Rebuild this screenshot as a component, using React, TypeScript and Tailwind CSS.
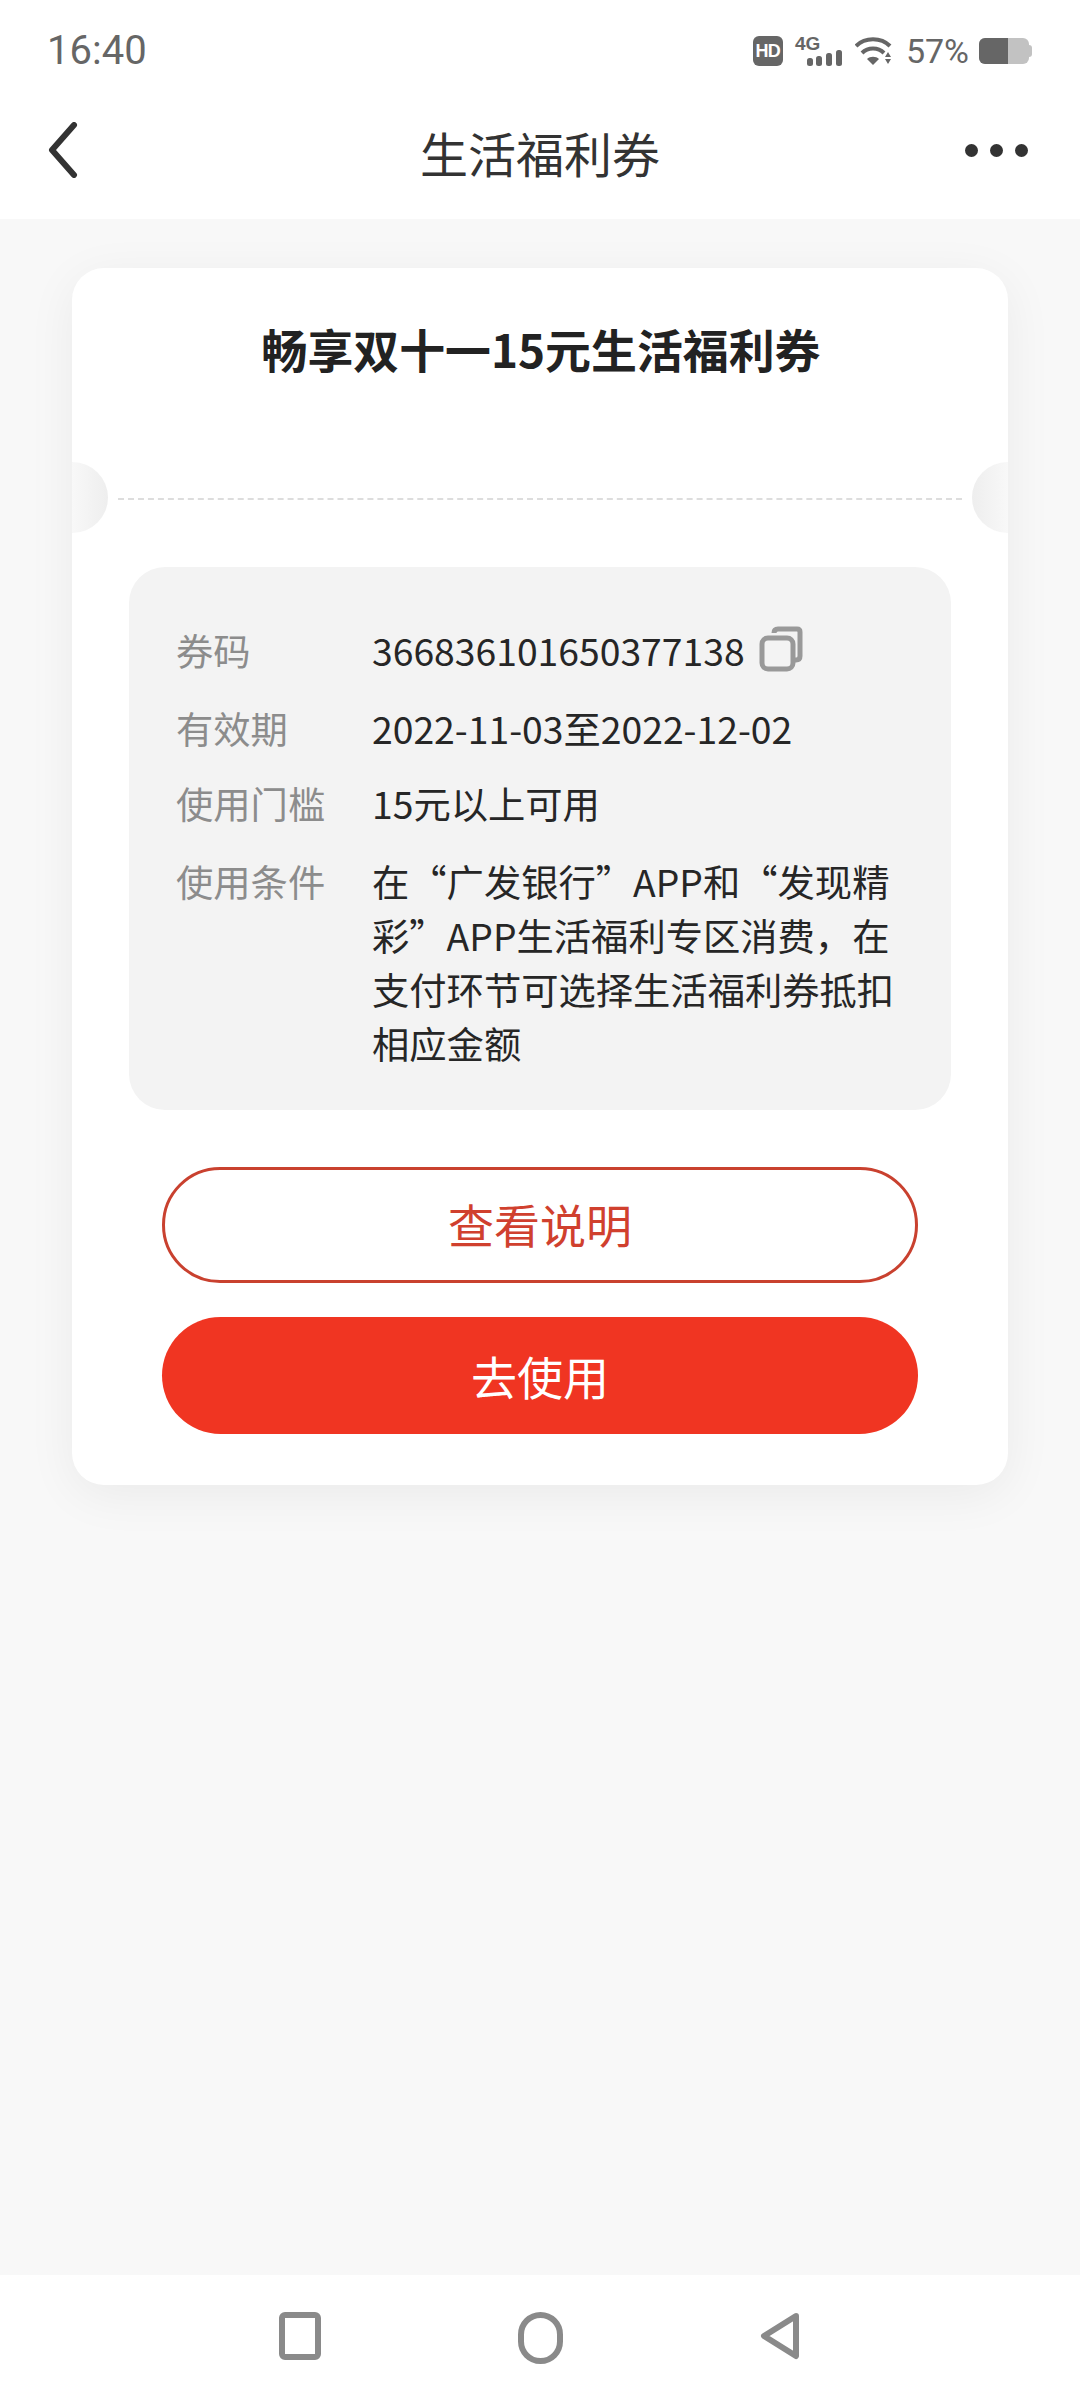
import React from "react";

const StatusIcons = () => (
  <div className="flex items-center text-[#666666]">
    <div className="flex h-[30px] w-[30px] items-center justify-center rounded-[6px] bg-[#666666] font-['Liberation_Sans',sans-serif] text-[18px] font-bold tracking-[-0.5px] text-white">
      HD
    </div>
    <div className="relative ml-[12px] h-[30px] w-[47px]">
      <span className="absolute left-0 top-[-3px] font-['Liberation_Sans',sans-serif] text-[19px] font-bold leading-[22px]">4G</span>
      <svg width="47" height="30" viewBox="0 0 47 30" fill="#666666">
        <rect x="12" y="22" width="6" height="8" rx="2.5" />
        <rect x="21" y="20" width="6" height="10" rx="2.5" />
        <rect x="31" y="17" width="6" height="13" rx="2.5" />
        <rect x="41" y="14" width="6" height="16" rx="2.5" />
      </svg>
    </div>
    <svg width="37" height="28" viewBox="0 0 37 28" className="ml-[13px]" fill="none" stroke="#666666" strokeWidth="4">
      <path d="M1 9 C 10 0, 26 0, 35 9" />
      <path d="M7 16 C 13 10, 23 10, 29 16" />
      <path d="M12 22 L18 28 L24 22 C 21 19, 15 19, 12 22 Z" fill="#666666" stroke="none" />
      <path d="M30 20 L33 15 L36 20 Z M30 22 L33 27 L36 22 Z" fill="#666666" stroke="none" />
    </svg>
    <span className="ml-[14px] font-['Roboto',sans-serif] text-[34px] leading-none">57%</span>
    <div className="ml-[10px] flex items-center">
      <div className="flex h-[26px] w-[50px] overflow-hidden rounded-[6px] bg-[#c2c2c2]">
        <div className="h-full w-[29px] bg-[#666666]" />
      </div>
      <div className="h-[12px] w-[3px] rounded-r-[3px] bg-[#c2c2c2]" />
    </div>
  </div>
);

const Row = ({ label, className, children }: { label: string; className?: string; children: React.ReactNode }) => (
  <div className={`flex ${className ?? ""}`}>
    <div className="w-[196px] shrink-0 text-[#8c8c8c]">{label}</div>
    <div className="flex-1 text-[#262626]">{children}</div>
  </div>
);

export default function App() {
  return (
    <div
      lang="zh-CN"
      className="flex h-[2400px] w-[1080px] flex-col bg-[#f8f8f8] font-['Noto_Sans_CJK_SC','Noto_Sans',sans-serif]"
    >
      <div className="bg-white">
        <div className="flex h-[100px] items-center justify-between pl-[47px] pr-[48px] pt-[2px]">
          <span className="font-['Roboto',sans-serif] text-[40px] text-[#666666]">16:40</span>
          <StatusIcons />
        </div>
        <div className="relative flex h-[119px] items-center justify-center pb-[15px]">
          <svg width="34" height="56" viewBox="0 0 34 56" className="absolute left-[46px] top-[22px]" fill="none" stroke="#333333" strokeWidth="6" strokeLinecap="round" strokeLinejoin="round">
            <path d="M28 3 L6 28 L28 53" />
          </svg>
          <span className="text-[48px] text-[#333333]">生活福利券</span>
          <div className="absolute right-[52px] top-[44px] flex gap-[12px]">
            <div className="h-[13px] w-[13px] rounded-full bg-[#333333]" />
            <div className="h-[13px] w-[13px] rounded-full bg-[#333333]" />
            <div className="h-[13px] w-[13px] rounded-full bg-[#333333]" />
          </div>
        </div>
      </div>

      <div className="flex-1 px-[72px] pt-[49px]">
        <div className="relative h-[1217px] rounded-[32px] bg-white px-[57px] shadow-[0_10px_50px_rgba(0,0,0,0.06)]">
          <div className="absolute left-0 top-[194px] h-[71px] w-[36px] rounded-r-full bg-gradient-to-r from-[#f8f8f8] to-[#eeeeee]" />
          <div className="absolute right-0 top-[194px] h-[71px] w-[36px] rounded-l-full bg-gradient-to-l from-[#f8f8f8] to-[#eeeeee]" />

          <div className="flex h-[230px] justify-center pl-[2px] pt-[40px]">
            <h1 className="text-[45.9px] font-bold leading-[80px] text-[#222222]">畅享双十一15元生活福利券</h1>
          </div>
          <div className="-mx-[11px] border-t-2 border-dashed border-[#dddddd]" />

          <div className="mt-[67px] h-[543px] rounded-[36px] bg-[#f3f3f3] pl-[47px] pr-[50px] pt-[56px] text-[37.3px] leading-[54px]">
            <Row label="券码">
              <div className="flex items-center">
                366836101650377138
                <svg width="44" height="46" viewBox="0 0 44 46" className="ml-[14px] -mt-[3px]" fill="none" stroke="#999999" strokeWidth="5">
                  <path d="M15 7 Q15 3 19 3 H38 Q41 3 41 6 V30 Q41 34 37 34 H34" />
                  <rect x="3" y="12" width="31" height="31" rx="6" />
                </svg>
              </div>
            </Row>
            <Row label="有效期" className="mt-[24px]">2022-11-03至2022-12-02</Row>
            <Row label="使用门槛" className="mt-[21px]">15元以上可用</Row>
            <Row label="使用条件" className="mt-[24px]">在“广发银行”APP和“发现精彩”APP生活福利专区消费，在支付环节可选择生活福利券抵扣相应金额</Row>
          </div>

          <div className="mx-[33px] mt-[57px] flex flex-col gap-[34px]">
            <button className="flex h-[116px] items-center justify-center rounded-full border-[3px] border-[#c9412f] bg-white pb-[3px] text-[46px] text-[#d0402e]">
              查看说明
            </button>
            <button className="flex h-[117px] items-center justify-center rounded-full bg-[#f03522] text-[46px] text-white">
              去使用
            </button>
          </div>
        </div>
      </div>

      <div className="flex h-[125px] items-center justify-center bg-white">
        <div className="grid w-[720px] grid-cols-3 justify-items-center">
          <div className="h-[48px] w-[42px] rounded-[6px] border-[6px] border-[#8a8a8a]" />
          <div className="h-[52px] w-[45px] rounded-full border-[6px] border-[#8a8a8a]" />
          <svg width="40" height="48" viewBox="0 0 40 48" fill="none" stroke="#8a8a8a" strokeWidth="6" strokeLinejoin="round">
            <path d="M36 4 L4 24 L36 44 Z" />
          </svg>
        </div>
      </div>
    </div>
  );
}
